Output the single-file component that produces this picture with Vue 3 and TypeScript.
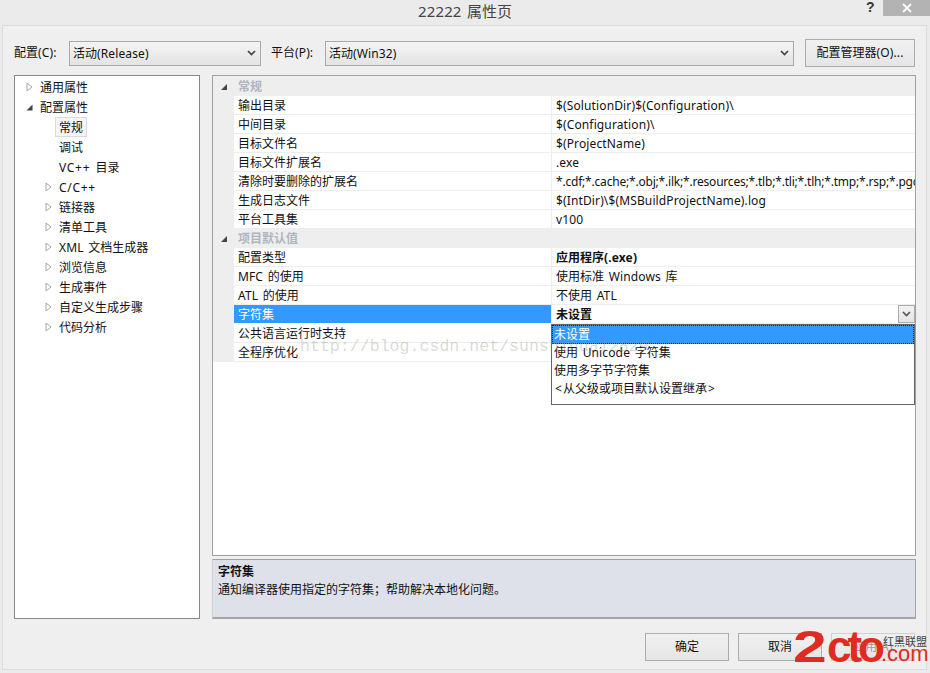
<script setup lang="ts">
import { h } from 'vue'

interface Row { name: string; value: string; bold?: boolean }
interface Group { title: string; rows: Row[] }
interface TreeItem { label: string; level: number; arrow?: 'closed' | 'open'; selected?: boolean }

const latClass = (run: string): string => {
  if (run.includes('++')) return 'lat wide'
  if (run.includes(';')) return 'lat tight'
  if (/[<>]/.test(run)) return 'lat ang'
  return 'lat'
}
const T = (props: { s: string }) =>
  h('span', props.s.split(/([\x00-\x7f]+)/).filter(Boolean).map((run) =>
    /^[\x00-\x7f]/.test(run) ? h('span', { class: latClass(run) }, run) : run,
  ))
T.props = ['s']

const tree: TreeItem[] = [
  { label: '通用属性', level: 0, arrow: 'closed' },
  { label: '配置属性', level: 0, arrow: 'open' },
  { label: '常规', level: 1, selected: true },
  { label: '调试', level: 1 },
  { label: 'VC++ 目录', level: 1 },
  { label: 'C/C++', level: 1, arrow: 'closed' },
  { label: '链接器', level: 1, arrow: 'closed' },
  { label: '清单工具', level: 1, arrow: 'closed' },
  { label: 'XML 文档生成器', level: 1, arrow: 'closed' },
  { label: '浏览信息', level: 1, arrow: 'closed' },
  { label: '生成事件', level: 1, arrow: 'closed' },
  { label: '自定义生成步骤', level: 1, arrow: 'closed' },
  { label: '代码分析', level: 1, arrow: 'closed' },
]

const groups: Group[] = [
  {
    title: '常规',
    rows: [
      { name: '输出目录', value: '$(SolutionDir)$(Configuration)\\' },
      { name: '中间目录', value: '$(Configuration)\\' },
      { name: '目标文件名', value: '$(ProjectName)' },
      { name: '目标文件扩展名', value: '.exe' },
      { name: '清除时要删除的扩展名', value: '*.cdf;*.cache;*.obj;*.ilk;*.resources;*.tlb;*.tli;*.tlh;*.tmp;*.rsp;*.pgc' },
      { name: '生成日志文件', value: '$(IntDir)\\$(MSBuildProjectName).log' },
      { name: '平台工具集', value: 'v100' },
    ],
  },
  {
    title: '项目默认值',
    rows: [
      { name: '配置类型', value: '应用程序(.exe)', bold: true },
      { name: 'MFC 的使用', value: '使用标准 Windows 库' },
      { name: 'ATL 的使用', value: '不使用 ATL' },
      { name: '字符集', value: '未设置', bold: true },
      { name: '公共语言运行时支持', value: '' },
      { name: '全程序优化', value: '' },
    ],
  },
]

const options = ['未设置', '使用 Unicode 字符集', '使用多字节字符集', '<从父级或项目默认设置继承>']
</script>

<template>
  <div class="window">
    <header class="titlebar">
      <span class="title"><T s="22222 属性页" /></span>
      <span class="help">?</span>
      <span class="close">
        <svg width="12" height="12" viewBox="0 0 12 12"><path d="M2 2 L10 10 M10 2 L2 10" stroke="#fff" stroke-width="1.8" /></svg>
      </span>
    </header>

    <main class="body">
      <div class="config">
        <label class="lbl lbl-c"><T s="配置(C):" /></label>
        <div class="combo combo-c">
          <span class="combo-text"><T s="活动(Release)" /></span>
          <svg class="chev" width="9" height="6" viewBox="0 0 9 6"><path d="M1 1 L4.5 4.5 L8 1" fill="none" stroke="#444" stroke-width="1.7" /></svg>
        </div>
        <label class="lbl lbl-p"><T s="平台(P):" /></label>
        <div class="combo combo-p">
          <span class="combo-text"><T s="活动(Win32)" /></span>
          <svg class="chev" width="9" height="6" viewBox="0 0 9 6"><path d="M1 1 L4.5 4.5 L8 1" fill="none" stroke="#444" stroke-width="1.7" /></svg>
        </div>
        <button class="btn mgr"><T s="配置管理器(O)..." /></button>
      </div>

      <div class="panes">
        <nav class="tree">
          <div
            v-for="item in tree"
            :key="item.label"
            class="tree-row"
            :class="'lv' + item.level"
          >
            <span class="arrow">
              <svg v-if="item.arrow === 'closed'" width="7" height="10" viewBox="0 0 7 10"><path d="M1 1 L6 5 L1 9 Z" fill="#fff" stroke="#a6a6a6" /></svg>
              <svg v-else-if="item.arrow === 'open'" width="7" height="7" viewBox="0 0 7 7"><path d="M0.5 6.5 H6.5 V0.5 Z" fill="#444" /></svg>
            </span>
            <span class="tree-label" :class="{ sel: item.selected }"><T :s="item.label" /></span>
          </div>
        </nav>

        <section class="right">
          <div class="grid">
            <div class="grid-top"></div>
            <template v-for="g in groups" :key="g.title">
              <div class="group">
                <span class="gutter-arrow">
                  <svg width="6" height="6" viewBox="0 0 6 6"><path d="M0 6 H6 V0 Z" fill="#444" /></svg>
                </span>
                <span class="group-title">{{ g.title }}</span>
              </div>
              <div v-for="r in g.rows" :key="r.name" class="row">
                <div class="gutter"></div>
                <div class="name" :class="{ active: r.name === '字符集' }"><T :s="r.name" /></div>
                <div class="value" :class="{ bold: r.bold }">
                  <span class="value-text"><T :s="r.value" /></span>
                  <span v-if="r.name === '字符集'" class="drop-btn">
                    <svg width="9" height="6" viewBox="0 0 9 6"><path d="M1 1 L4.5 4.5 L8 1" fill="none" stroke="#555" stroke-width="1.7" /></svg>
                  </span>
                </div>
              </div>
            </template>

            <ul class="dropdown">
              <li v-for="(o, i) in options" :key="o" :class="{ picked: i === 0 }"><T :s="o" /></li>
            </ul>
            <span class="watermark">http://blog.csdn.net/sunshihua12829</span>
          </div>
          <div class="desc">
            <div class="desc-title">字符集</div>
            <div>通知编译器使用指定的字符集；帮助解决本地化问题。</div>
          </div>
        </section>
      </div>

      <footer class="footer">
        <button class="btn foot">确定</button>
        <button class="btn foot">取消</button>
        <button class="btn foot disabled"><T s="应用(A)" /></button>
        <div class="logo">
          <span class="logo-two">2</span>
          <span class="logo-rest">cto</span>
          <span class="logo-side">
            <span class="logo-cn">红黑联盟</span>
            <span class="logo-com">.com</span>
          </span>
        </div>
      </footer>
    </main>
  </div>
</template>

<style>
html, body { margin: 0; padding: 0; background: #e9e9e9; }
.lat { letter-spacing: 0.13px; word-spacing: 1.4px; }
.lat.wide { letter-spacing: 0.7px; }
.lat.tight { letter-spacing: -0.2px; }
.lat.ang { padding: 0 1px; }
</style>

<style scoped>
.window {
  width: 930px;
  height: 673px;
  background: #ebebeb;
  display: flex;
  flex-direction: column;
  font-family: "Noto Sans", "Noto Sans CJK SC", sans-serif;
  font-size: 12px;
  line-height: 18px;
  color: #111;
  overflow: hidden;
}
.titlebar {
  height: 25px;
  flex: none;
  position: relative;
  text-align: center;
}
.title {
  display: block;
  font-size: 15px;
  line-height: 22px;
  color: #444;
}
.help {
  position: absolute;
  left: 866px;
  top: -3px;
  font: bold 14px/20px "Liberation Sans", sans-serif;
  color: #333;
}
.close {
  position: absolute;
  left: 883px;
  top: 0;
  width: 47px;
  height: 16px;
  background: #b3b3b3;
  display: flex;
  align-items: center;
  justify-content: center;
}
.body {
  margin: 0 3px 3px 2px;
  flex: 1;
  min-height: 0;
  border: 1px solid #dcdcdc;
  background: #efefef;
  display: flex;
  flex-direction: column;
  padding: 0 11px;
}
.config {
  display: flex;
  align-items: center;
  height: 28px;
  margin-top: 13px;
}
.lbl { white-space: nowrap; }
.lbl-c { width: 55px; }
.lbl-p { width: 54px; margin-left: 10px; }
.combo {
  height: 25px;
  box-sizing: border-box;
  border: 1px solid #a9a9a9;
  background: linear-gradient(#f4f4f4, #e4e4e4);
  display: flex;
  align-items: center;
  justify-content: space-between;
  padding: 0 4px 0 3px;
}
.combo-text { padding-top: 1px; }
.combo-c { width: 192px; }
.combo-p { width: 469px; }
.btn {
  font: inherit;
  color: #111;
  border: 1px solid #acacac;
  background: linear-gradient(#f1f1f1, #e5e5e5);
  padding: 0;
  box-sizing: border-box;
}
.mgr { width: 110px; height: 28px; margin-left: 11px; }
.panes {
  display: flex;
  margin-top: 8px;
  margin-right: -1px;
  gap: 12px;
  height: 544px;
}
.tree {
  width: 186px;
  box-sizing: border-box;
  border: 1px solid #828790;
  background: #fff;
  padding-top: 1px;
}
.tree-row {
  height: 20px;
  display: flex;
  align-items: center;
}
.lv0 { padding-left: 11px; }
.lv1 { padding-left: 30px; }
.arrow {
  width: 11px;
  flex: none;
  display: flex;
  align-items: center;
}
.tree-label {
  padding: 0 3px;
  margin-left: -1px;
  white-space: nowrap;
  height: 18px;
  line-height: 20px;
  border: 1px solid transparent;
  margin-right: -1px;
}
.tree-label.sel { background: #f5f5f5; border-color: #dadada; }
.right {
  flex: 1;
  min-width: 0;
  display: flex;
  flex-direction: column;
}
.grid {
  flex: 1;
  min-height: 0;
  position: relative;
  background: #fff;
  border: 1px solid #a0a0a0;
  overflow: hidden;
}
.grid-top { height: 1px; background: #f0f0f0; }
.group {
  height: 19px;
  background: #eeeeee;
  display: flex;
  align-items: center;
}
.gutter-arrow {
  width: 21px;
  flex: none;
  box-sizing: border-box;
  padding-left: 8px;
  display: flex;
  align-items: center;
}
.group-title {
  padding-left: 4px;
  padding-top: 1px;
  color: #b0b5bd;
  font-weight: 700;
}
.row {
  height: 19px;
  display: flex;
  box-sizing: border-box;
}
.gutter {
  width: 21px;
  flex: none;
  background: #eeeeee;
}
.name {
  width: 318px;
  flex: none;
  box-sizing: border-box;
  padding-left: 4px;
  line-height: 20px;
  border-bottom: 1px solid #ededed;
  border-right: 1px solid #ededed;
  white-space: nowrap;
}
.name.active {
  background: #3399ff;
  color: #fff;
  border-bottom-color: #fff;
}
.value {
  flex: 1;
  min-width: 0;
  box-sizing: border-box;
  padding-left: 4px;
  line-height: 20px;
  border-bottom: 1px solid #ededed;
  white-space: nowrap;
  overflow: hidden;
  position: relative;
}
.value.bold { font-weight: 700; }
.value-text { display: block; }
.drop-btn {
  position: absolute;
  right: 0;
  top: 0;
  width: 17px;
  height: 18px;
  box-sizing: border-box;
  border: 1px solid #acacac;
  background: linear-gradient(#f2f2f2, #e4e4e4);
  display: flex;
  align-items: center;
  justify-content: center;
}
.dropdown {
  position: absolute;
  left: 338px;
  top: 248px;
  width: 364px;
  height: 81px;
  box-sizing: border-box;
  margin: 0;
  padding: 0;
  list-style: none;
  background: #fff;
  border: 1px solid #646464;
  z-index: 1;
}
.dropdown li {
  height: 18px;
  padding-left: 2px;
  white-space: nowrap;
}
.dropdown li.picked {
  height: 19px;
  line-height: 20px;
  background: #3399ff;
  color: #fff;
  outline: 1px dotted #222;
  outline-offset: -1px;
}
.watermark {
  position: absolute;
  left: 87px;
  top: 261px;
  font: 16.6px/20px "Liberation Mono", monospace;
  color: rgba(140, 140, 120, 0.32);
  white-space: nowrap;
  z-index: 2;
}
.desc {
  flex: none;
  margin-top: 3px;
  height: 60px;
  box-sizing: border-box;
  background: #dee1e9;
  border-top: 1px solid #a0a0a0;
  border-bottom: 2px solid #a6a6a6;
  border-right: 1px solid #a6a6a6;
  border-left: 1px solid #d0d0d0;
  padding: 3px 5px;
}
.desc-title { font-weight: 700; }
.footer {
  flex: 1;
  display: flex;
  align-items: flex-start;
  padding-top: 14px;
  position: relative;
}
.foot {
  width: 86px;
  height: 28px;
  margin-left: 9px;
}
.foot:first-child { margin-left: 631px; }
.disabled { color: #9a9a9a; border-color: #d0d0d0; }
.logo {
  position: absolute;
  left: 779px;
  top: 12px;
  display: flex;
  align-items: flex-end;
  z-index: 3;
}
.logo-two, .logo-rest {
  font: 700 44px/32px "Liberation Sans", sans-serif;
  color: #e12a20;
}
.logo-two {
  width: 34px;
  transform: scaleX(1.38);
  transform-origin: left;
}
.logo-rest {
  width: 54px;
  letter-spacing: -4px;
}
.logo-side {
  display: flex;
  flex-direction: column;
  align-items: flex-start;
}
.logo-cn {
  font-size: 11px;
  line-height: 14px;
  color: #444;
  margin-left: 2px;
  margin-bottom: -4px;
}
.logo-com {
  font: 400 22px/18px "Liberation Sans", sans-serif;
  color: #e12a20;
}
</style>
